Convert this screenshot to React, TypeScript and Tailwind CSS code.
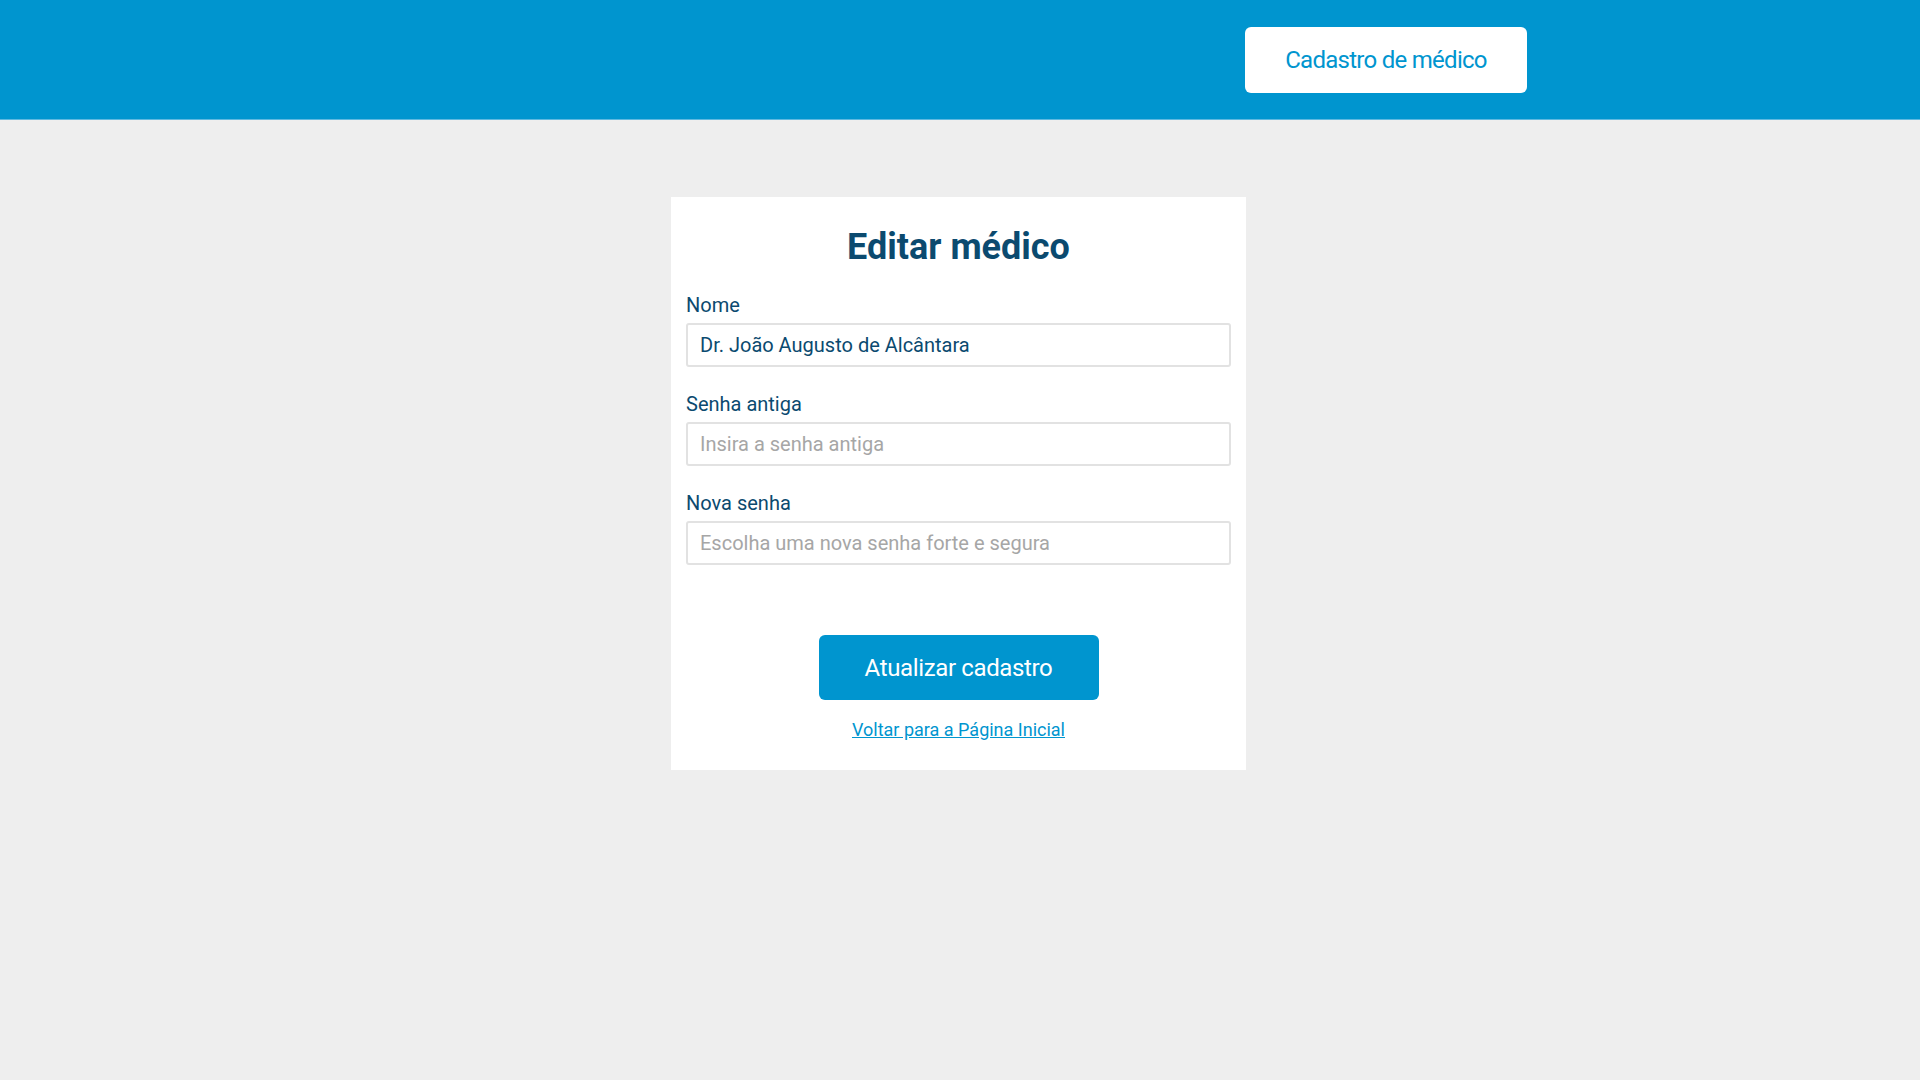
import { useState } from 'react';

const FONT = { fontFamily: 'Roboto, "Noto Sans", sans-serif' };

function Campo({
  label,
  value,
  placeholder,
  type = 'text',
  onChange,
}: {
  label: string;
  value: string;
  placeholder?: string;
  type?: string;
  onChange: (v: string) => void;
}) {
  return (
    <div className="flex flex-col">
      <label className="text-[20px] leading-[24px] text-[#0b4a6f] mb-[6px]">{label}</label>
      <input
        type={type}
        value={value}
        placeholder={placeholder}
        onChange={(e) => onChange(e.target.value)}
        className="h-[44px] w-full rounded-[3px] border-2 border-[#e2e2e2] bg-white px-[12px] text-[20px] text-[#0b4a6f] placeholder:text-[#a6a6a6] outline-none"
        style={FONT}
      />
    </div>
  );
}

export default function App() {
  const [nome, setNome] = useState('Dr. João Augusto de Alcântara');
  const [senhaAntiga, setSenhaAntiga] = useState('');
  const [novaSenha, setNovaSenha] = useState('');

  return (
    <div className="min-h-screen bg-[#eeeeee]" style={FONT}>
      {/* Cabeçalho */}
      <header className="h-[120px] bg-[#0095cf] border-b border-[#5fb9e0]">
        <div className="mx-auto w-[1134px] h-full flex items-center justify-end">
          <button className="w-[282px] h-[66px] rounded-[6px] bg-white text-[24px] tracking-[-0.03em] text-[#0095cf]">
            Cadastro de médico
          </button>
        </div>
      </header>

      {/* Formulário */}
      <main className="flex justify-center pt-[77px] pr-[3px]">
        <div className="w-[575px] bg-white px-[15px] pt-[27px] pb-[28px]">
          <h1 className="text-center text-[36px] leading-[46px] font-bold text-[#0b4a6f] mb-[23px]">
            Editar médico
          </h1>
          <div className="flex flex-col gap-[25px]">
            <Campo label="Nome" value={nome} onChange={setNome} />
            <Campo
              label="Senha antiga"
              type="password"
              value={senhaAntiga}
              placeholder="Insira a senha antiga"
              onChange={setSenhaAntiga}
            />
            <Campo
              label="Nova senha"
              type="password"
              value={novaSenha}
              placeholder="Escolha uma nova senha forte e segura"
              onChange={setNovaSenha}
            />
          </div>
          <div className="flex flex-col items-center mt-[70px]">
            <button className="w-[280px] h-[65px] rounded-[6px] bg-[#0095cf] text-white text-[24px] tracking-[-0.015em]">
              Atualizar cadastro
            </button>
            <a href="#" className="mt-[18px] text-[18px] leading-[24px] text-[#0095cf] underline">
              Voltar para a Página Inicial
            </a>
          </div>
        </div>
      </main>
    </div>
  );
}
